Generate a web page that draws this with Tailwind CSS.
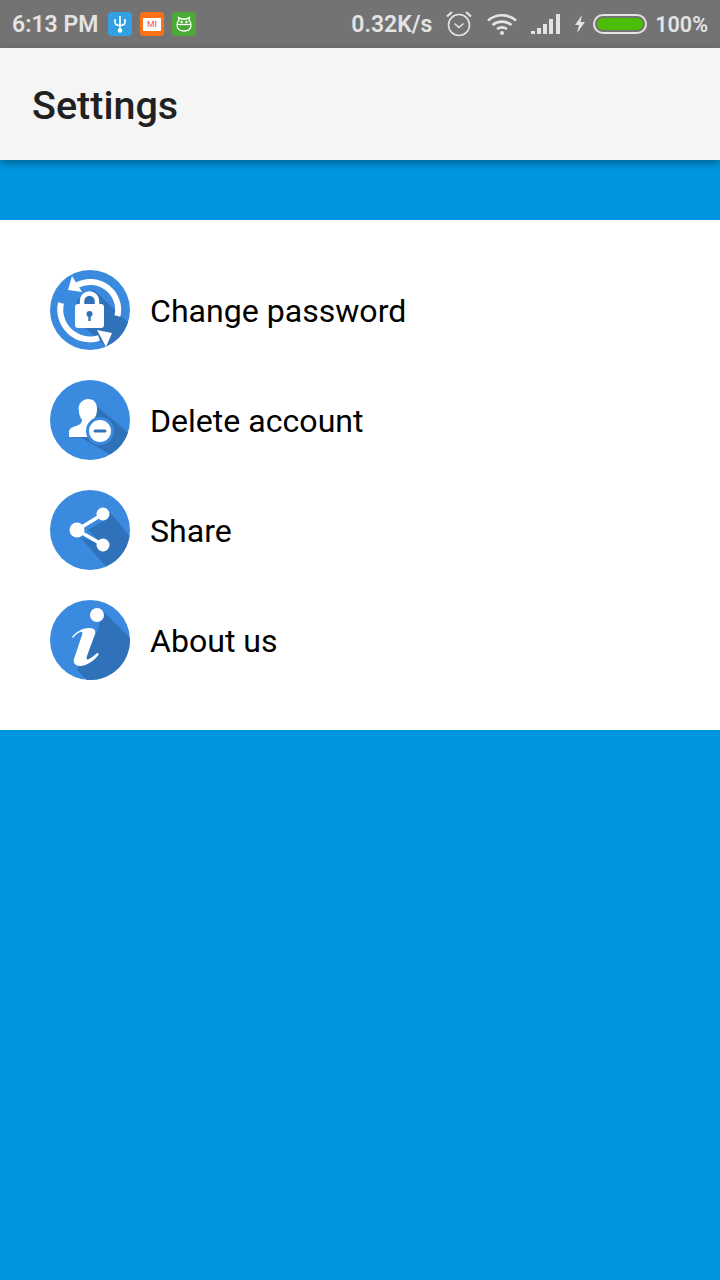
<!DOCTYPE html>
<html lang="en">

<head>
    <meta charset="UTF-8">
    <meta name="viewport" content="width=device-width, initial-scale=1.0">
    <title>Settings</title>
    <script src="https://cdn.jsdelivr.net/npm/@tailwindcss/browser@4"></script>
</head>

<body class="bg-[#0095df] h-[1280px] w-[720px] overflow-hidden font-['Roboto',sans-serif]">
    <!-- status bar -->
    <div class="h-12 bg-[#737373] flex items-center text-[#e4e4e4] font-semibold text-[23px] pl-3 pr-3">
        <span class="w-[96px] pt-[2px] whitespace-nowrap">6:13 PM</span>
        <div class="flex gap-2">
            <div class="w-6 h-6 rounded bg-[#33a0e4] flex items-center justify-center">
                <svg width="16" height="18" viewBox="0 0 16 18" fill="none" stroke="#fff" stroke-width="1.6">
                    <path d="M8 1v16M3 4v3c0 2.500 2 3.500 5 3.500S13 9.500 13 7V4" />
                    <circle cx="8" cy="15.500" r="1.500" fill="#fff" />
                </svg>
            </div>
            <div class="w-6 h-6 rounded bg-[#f97316] flex items-center justify-center">
                <div class="w-[18px] h-[13px] bg-white rounded-[1px] flex items-center justify-center text-[9px] leading-none font-normal text-[#ef4444] font-['Liberation_Sans',sans-serif]">MI</div>
            </div>
            <div class="w-6 h-6 rounded bg-[#4aaa35] flex items-center justify-center">
                <svg width="18" height="18" viewBox="0 0 18 18" fill="none" stroke="#fff" stroke-width="1.300">
                    <path d="M4 5 3.500 2.500 6.500 4h5l3-1.500L14 5c1.500 1.500 2 3 2 5 0 4-3 6-7 6s-7-2-7-6c0-2 .5-3.500 2-5Z" />
                    <path d="M2.500 9.500h13" />
                    <circle cx="6.500" cy="7" r=".6" fill="#fff" />
                    <circle cx="11.500" cy="7" r=".6" fill="#fff" />
                </svg>
            </div>
        </div>
        <span class="ml-auto w-[93px] pt-[2px] whitespace-nowrap">0.32K/s</span>
        <svg width="30" height="28" viewBox="0 0 30 28" fill="none" stroke="#e4e4e4" stroke-width="1.600">
            <circle cx="15" cy="15" r="10.500" />
            <path d="M10.500 13.500l4.500 4 4.500-4" />
            <path stroke-width="2.200" d="M3 6.500 8 2M27 6.500 22 2" />
        </svg>
        <svg class="ml-3" width="32" height="24" viewBox="0 0 32 24" fill="none" stroke="#e4e4e4" stroke-width="2.600">
            <path d="M2 8.500c8-7 20-7 28 0M6.500 13c5.500-4.500 13.500-4.500 19 0M11 17c3-2 7-2 10 0" />
            <circle cx="16" cy="21" r="2" fill="#e4e4e4" stroke="none" />
        </svg>
        <svg class="ml-3" width="31" height="22" viewBox="0 0 31 22" fill="#e4e4e4">
            <rect x="1" y="18" width="4" height="3" />
            <rect x="7" y="15" width="4" height="6" />
            <rect x="13" y="11" width="4" height="10" />
            <rect x="19" y="6" width="4" height="15" />
            <rect x="26" y="1" width="4" height="20" />
        </svg>
        <svg class="ml-3" width="14" height="20" viewBox="0 0 14 20" fill="#e4e4e4">
            <path d="M9 1 2 11h4l-2 8 8-11H7.500Z" />
        </svg>
        <div class="ml-[6px] w-[54px] h-5 rounded-full border-2 border-[#e4e4e4] p-[2px]">
            <div class="h-full rounded-full bg-[#4bbd05]"></div>
        </div>
        <span class="ml-2 pt-[2px] text-[21.5px]">100%</span>
    </div>

    <!-- app bar -->
    <div class="relative h-[112px] bg-[#f5f5f5] flex items-center pl-8 pt-1 text-[39.5px] font-medium text-[#212121] shadow-[0_3px_8px_rgba(0,0,0,0.35)]">
        Settings
    </div>

    <div class="mt-[60px] h-[510px] bg-white pt-[50px] pl-[50px] flex flex-col gap-[30px] text-[32.1px] text-black">
        <div class="flex items-center gap-5 h-20">
            <svg width="80" height="80" viewBox="0 0 80 80">
                <circle cx="40" cy="40" r="40" fill="#3a8adf" />
                <path fill="#2f72b9" d="M27 30 44 20 78 52.600A40 40 0 0 1 56 76.600L26 50Z" />
                <g fill="none" stroke="#fff" stroke-width="6">
                    <path d="M27 15.200A28 28 0 0 1 67.500 46" />
                    <path d="M11 33A29.800 29.800 0 0 0 49 68" />
                </g>
                <path fill="#fff" d="M22 6 18 20 32 22Z" />
                <path fill="#fff" d="M47 60 56 77 62 63Z" />
                <path fill="none" stroke="#fff" stroke-width="4.500" d="M32 36v-5a7.500 7.500 0 0 1 15 0v5" />
                <rect x="25" y="34" width="29" height="24" rx="3" fill="#fff" />
                <circle cx="39.500" cy="44" r="3" fill="#2f72b9" />
                <rect x="38.300" y="45" width="2.400" height="6" fill="#2f72b9" />
            </svg>
            <span class="mt-[2px]">Change password</span>
        </div>
        <div class="flex items-center gap-5 h-20">
            <svg width="80" height="80" viewBox="0 0 80 80">
                <circle cx="40" cy="40" r="40" fill="#3a8adf" />
                <path fill="#2f72b9" d="M48 27 78 52.600A40 40 0 0 1 60 74.600L32 58 22 57Z" />
                <path fill="#fff" d="M38 19c6 0 9 4 9 10 0 4-1 8-4 11 0 3 1 4 5 5l4 2V57H19V52c0-3 3-5 7-6 4-1 6-3 6-6-2-3-3-6-3-8 0-2-1-4 0-6 1-4 5-7 9-7Z" />
                <circle cx="50" cy="51" r="12.500" fill="#fff" stroke="#3a8adf" stroke-width="3" />
                <rect x="43.500" y="49.500" width="13" height="3" rx="1.500" fill="#2f72b9" />
            </svg>
            <span class="mt-[2px]">Delete account</span>
        </div>
        <div class="flex items-center gap-5 h-20">
            <svg width="80" height="80" viewBox="0 0 80 80">
                <circle cx="40" cy="40" r="40" fill="#3a8adf" />
                <path fill="#2f72b9" d="M58 20 79.500 46A40 40 0 0 1 56 76.600L30 47 53 55 38 40 58 28Z" />
                <path fill="none" stroke="#fff" stroke-width="3.500" d="M53 24 27 40 53 55" />
                <circle cx="53" cy="24" r="6.500" fill="#fff" />
                <circle cx="27" cy="40" r="7.500" fill="#fff" />
                <circle cx="53" cy="55" r="6.500" fill="#fff" />
            </svg>
            <span class="mt-[2px]">Share</span>
        </div>
        <div class="flex items-center gap-5 h-20">
            <svg width="80" height="80" viewBox="0 0 80 80">
                <circle cx="40" cy="40" r="40" fill="#3a8adf" />
                <path fill="#2f72b9" d="M52 10 79.950 38A40 40 0 0 1 36.900 79.900L27 70 48 30Z" />
                <circle cx="47" cy="15" r="7" fill="#fff" />
                <path fill="#fff" d="M22 37c4-5 10-9 17-9 5 0 7 2 6 6L37 56c-1 3 0 4 2 3 2-1 5-3 8-6l2 1c-4 6-12 12-19 12-5 0-7-3-6-7l8-24c1-3 0-4-2-3-2 1-5 3-7 6Z" />
            </svg>
            <span class="mt-[2px]">About us</span>
        </div>
    </div>
</body>

</html>
